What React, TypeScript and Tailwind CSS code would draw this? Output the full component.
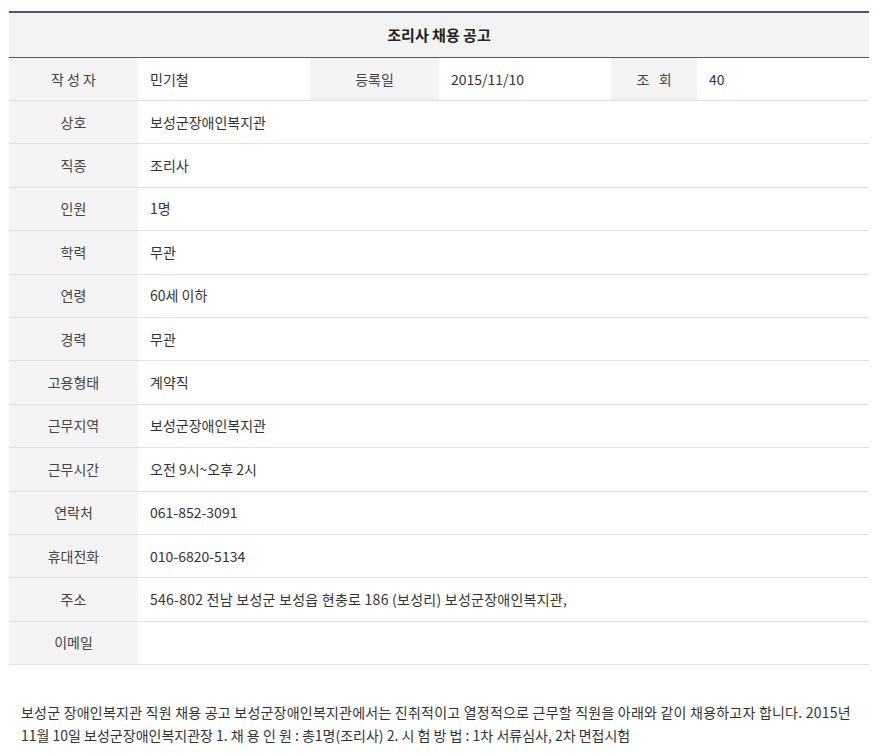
import React from 'react';

const rows: [string, string][] = [
  ['상호', '보성군장애인복지관'],
  ['직종', '조리사'],
  ['인원', '1명'],
  ['학력', '무관'],
  ['연령', '60세 이하'],
  ['경력', '무관'],
  ['고용형태', '계약직'],
  ['근무지역', '보성군장애인복지관'],
  ['근무시간', '오전 9시~오후 2시'],
  ['연락처', '061-852-3091'],
  ['휴대전화', '010-6820-5134'],
  ['주소', '546-802 전남 보성군 보성읍 현충로 186 (보성리) 보성군장애인복지관,'],
  ['이메일', ''],
];

const Label: React.FC<{ w: string; children: React.ReactNode }> = ({ w, children }) => (
  <div className={`${w} shrink-0 h-full flex items-center justify-center bg-[#f4f4f4] text-[#444]`}>{children}</div>
);

export default function App() {
  return (
    <div
      className="bg-white w-[882px] text-[14px] text-[#333]"
      style={{ fontFamily: '"Noto Sans CJK KR", "Noto Sans", sans-serif' }}
    >
      <div className="pt-[11px] px-[9px]">
        <div className="w-[860px] border-t-2 border-[#4b5671]">
          <div className="h-[45px] flex items-center justify-center bg-[#f3f3f3] border-b border-[#4b5671] text-[15px] font-bold text-[#222]">
            조리사 채용 공고
          </div>
          <div className="h-[43px] flex items-center border-b border-[#e1e1e1]">
            <Label w="w-[129px]">작 성 자</Label>
            <div className="w-[172px] pl-[12px]">민기철</div>
            <Label w="w-[129px]">등록일</Label>
            <div className="w-[172px] pl-[12px]">2015/11/10</div>
            <Label w="w-[86px]">조&nbsp;&nbsp;&nbsp;회</Label>
            <div className="flex-1 pl-[12px]">40</div>
          </div>
          {rows.map(([k, v]) => (
            <div key={k} className="h-[43.4px] flex items-center border-b border-[#e1e1e1]">
              <Label w="w-[129px]">{k}</Label>
              <div className={`flex-1 pl-[12px] ${k === '주소' ? 'tracking-[0.25px]' : ''}`}>{v}</div>
            </div>
          ))}
        </div>
      </div>
      <div className="pt-[36px] px-[21px] leading-[23px] text-[14px] text-[#333]">
        <div className="whitespace-nowrap tracking-[0.22px]">
          보성군 장애인복지관 직원 채용 공고 보성군장애인복지관에서는 진취적이고 열정적으로 근무할 직원을 아래와 같이 채용하고자 합니다. 2015년
        </div>
        <div className="whitespace-nowrap">
          11월 10일 보성군장애인복지관장 1. 채 용 인 원 : 총1명(조리사) 2. 시 험 방 법 : 1차 서류심사, 2차 면접시험
        </div>
      </div>
    </div>
  );
}
